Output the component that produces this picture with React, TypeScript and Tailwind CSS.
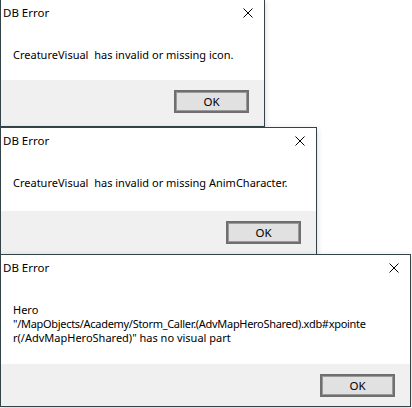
import type { ReactNode } from 'react'

const CloseIcon = () => (
  <svg width="10" height="10" viewBox="0 0 10 10" className="block">
    <path d="M0.5 0.5 L9.5 9.5 M9.5 0.5 L0.5 9.5" stroke="#000" strokeWidth="1" fill="none" />
  </svg>
)

type DialogProps = {
  className: string
  bodyClass: string
  children: ReactNode
}

const Dialog = ({ className, bodyClass, children }: DialogProps) => {
  return (
    <div
      className={`absolute left-0 flex flex-col border border-[#34434a] bg-white shadow-[0_2px_6px_rgba(0,0,0,0.18)] ${className}`}
    >
      <div className={`flex flex-col ${bodyClass}`}>
        <div className="flex h-[26px] items-center justify-between pl-[2px] pr-[11px]">
          <span className="text-[11.5px]">DB Error</span>
          <CloseIcon />
        </div>
        <div className="pl-[12px] pt-[22px] text-[11px] leading-[14px] whitespace-pre">{children}</div>
      </div>
      <div className="flex flex-1 items-start justify-end bg-[#f0f0f0] pr-[15px] pt-[10px]">
        <button className="flex h-[23px] w-[75px] items-center justify-center border-2 border-[#6f6f6f] bg-[#e1e1e1] text-[11.5px] text-black outline outline-1 -outline-offset-3 outline-[#9a9a9a]">
          OK
        </button>
      </div>
    </div>
  )
}

export default function App() {
  return (
    <div
      className="relative h-[408px] w-[412px] overflow-hidden bg-white text-black"
      style={{ fontFamily: '"Noto Sans", "Open Sans", sans-serif' }}
    >
      <Dialog className="top-[-1px] h-[128px] w-[265px]" bodyClass="h-[80px]">
        {'CreatureVisual  has invalid or missing icon.'}
      </Dialog>
      <Dialog className="top-[127px] h-[128px] w-[317px]" bodyClass="h-[83px]">
        {'CreatureVisual  has invalid or missing AnimCharacter.'}
      </Dialog>
      <Dialog className="top-[254px] h-[153px] w-[411px]" bodyClass="h-[109px]">
        <div>Hero</div>
        <div className="tracking-[-0.3px]">"/MapObjects/Academy/Storm_Caller.(AdvMapHeroShared).xdb#xpointe</div>
        <div>r(/AdvMapHeroShared)" has no visual part</div>
      </Dialog>
    </div>
  )
}
